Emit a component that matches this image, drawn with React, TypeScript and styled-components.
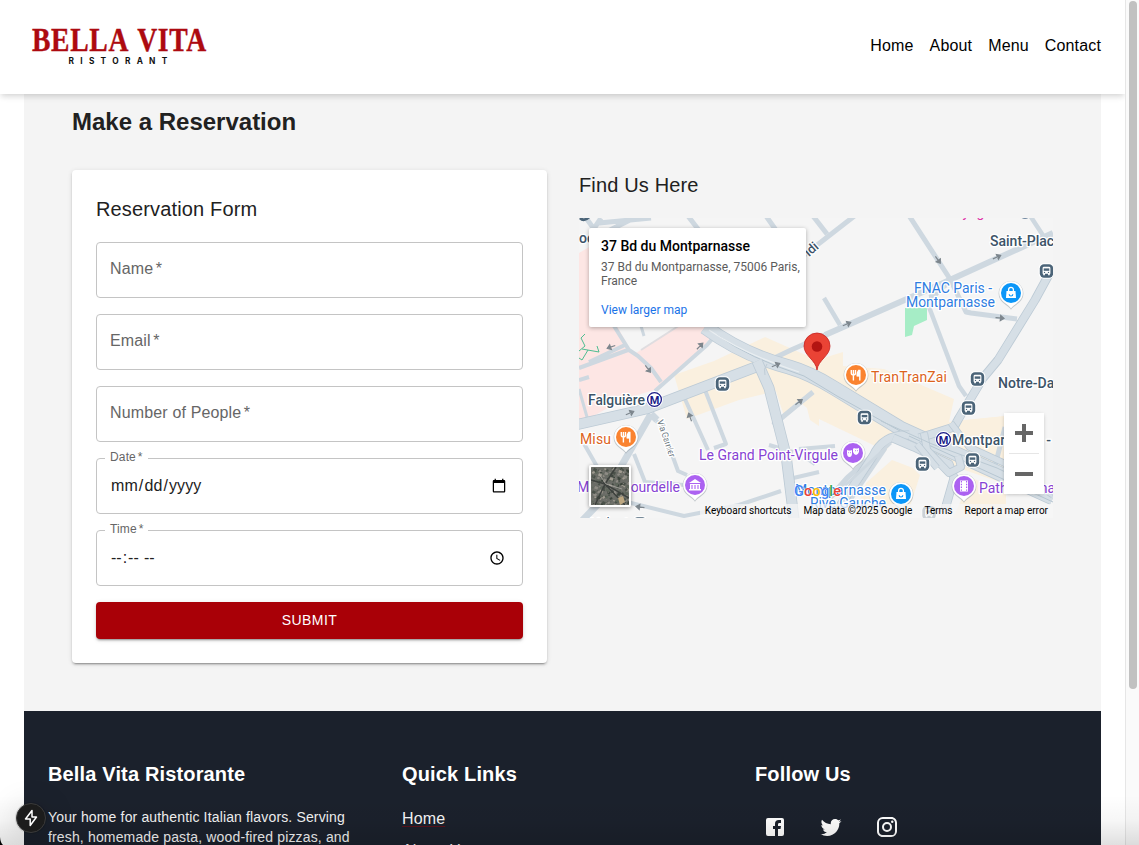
import React from 'react';
import styled, { createGlobalStyle } from 'styled-components';

const Global = createGlobalStyle`
  * { box-sizing: border-box; }
  html, body, #root { height: 100%; }
  body { margin: 0; overflow: hidden; background: #fff; color: rgba(0,0,0,.87); font-family: "Liberation Sans", Helvetica, Arial, sans-serif; }
  h1, h2, h3, p { margin: 0; }
`;

const Window = styled.div`
  display: grid; grid-template-columns: 1fr 14px; height: 845px; overflow: hidden; position: relative;
`;
const Page = styled.div`
  display: flex; flex-direction: column; overflow: hidden; min-width: 0;
`;
const Track = styled.div`
  background: #fafafa; border-left: 1px solid #e6e6e6; padding: 1px 2px 0 3px;
`;
const Thumb = styled.div`
  width: 8px; height: 688px; border-radius: 4px; background: #c1c1c1;
`;
const Header = styled.header`
  flex: none; z-index: 1; height: 94px; background: #fff; padding: 0 24px;
  display: flex; justify-content: space-between; align-items: center;
  box-shadow: 0 4px 6px -1px rgba(0,0,0,.11), 0 2px 6px -1px rgba(0,0,0,.07);
`;
const Nav = styled.nav`
  display: flex; gap: 16px; padding-bottom: 3px;
`;
const NavLink = styled.a`
  color: #000; font-size: 16px; line-height: 24px; letter-spacing: .15px;
`;
const Content = styled.main`
  flex: none; margin: 0 24px; height: 617px; padding: 10px 48px 0; background: #f4f4f4;
`;
const PageTitle = styled.h1`
  font-size: 24px; line-height: 36px; font-weight: 700; color: #212121;
`;
const Columns = styled.div`
  display: grid; grid-template-columns: 475px 474px; gap: 32px; margin-top: 30px; align-items: start;
`;
const Card = styled.form`
  display: flex; flex-direction: column; gap: 16px; height: 493px; padding: 24px; background: #fff; border-radius: 4px;
  box-shadow: 0 3px 1px -2px rgba(0,0,0,.2), 0 2px 2px rgba(0,0,0,.14), 0 1px 5px rgba(0,0,0,.12);
`;
const SectionTitle = styled.h2`
  font-size: 20px; line-height: 30px; padding-bottom: 2px; font-weight: 400; letter-spacing: .15px; color: #212121;
`;
const Field = styled.label`
  position: relative; display: flex; align-items: center; height: 56px; flex: none;
  padding: 0 13px; border: 1px solid #c4c4c4; border-radius: 4px;
  font-size: 16px; letter-spacing: .15px; color: #666;
`;
const FieldLabel = styled.span`
  padding-bottom: 3px;
`;
const FloatingLabel = styled.span`
  position: absolute; left: 8px; top: -9px; padding: 0 5px; background: #fff; font-size: 12px; line-height: 14px;
`;
const Required = styled.span`
  margin-left: .15em;
`;
const Picker = styled.input`
  width: 100%; border: 0; outline: 0; padding: 0; background: transparent; color: #212121;
  font: 16px "Liberation Sans", Helvetica, sans-serif; letter-spacing: .1px;
`;
const Submit = styled.button`
  height: 37px; flex: none; border: 0; border-radius: 4px; background: #a90007; color: #fff; text-transform: uppercase;
  padding: 0 0 2px; font: 14px "Liberation Sans", Helvetica, sans-serif; letter-spacing: .4px;
  box-shadow: 0 3px 1px -2px rgba(0,0,0,.2), 0 2px 2px rgba(0,0,0,.14), 0 1px 5px rgba(0,0,0,.12);
`;
const MapColumn = styled.section`
  display: flex; flex-direction: column; gap: 16px;
`;
const MapFrame = styled.div`
  position: relative; height: 300px; overflow: hidden; font-family: Roboto, sans-serif;
`;
const MapDrawing = styled.svg`
  display: block; font-family: Roboto, sans-serif;
`;
const PlaceCard = styled.div`
  position: absolute; left: 10px; top: 10px; width: 217px; height: 99px; padding: 10px 0 0 12px; background: #fff;
  border-radius: 2px; box-shadow: 0 1px 4px rgba(0,0,0,.3); font-size: 12px; line-height: 14px; color: #5b5b5b;
`;
const PlaceName = styled.h3`
  font-size: 14px; line-height: 17px; font-weight: 500; color: #000; margin-bottom: 5px;
`;
const MapLink = styled.a`
  display: block; margin-top: 15px; color: #1a73e8;
`;
const ZoomControl = styled.div`
  position: absolute; right: 9px; top: 195px; width: 40px; height: 81px; background: #fff; padding: 0 5px;
  box-shadow: 0 1px 4px -1px rgba(0,0,0,.3);
`;
const ZoomButton = styled.div`
  height: 40px; display: grid; place-items: center;
  & + & { border-top: 1px solid #e6e6e6; height: 41px; }
`;
const Satellite = styled.div`
  position: absolute; left: 10px; top: 247px; width: 42px; height: 42px; border: 2px solid #fff; border-radius: 2px;
  box-shadow: 0 1px 4px rgba(0,0,0,.4); overflow: hidden;
`;
const Legal = styled.div`
  position: absolute; right: 0; bottom: 0; height: 14px; display: flex; gap: 12px; padding: 0 5px;
  background: rgba(245,245,245,.75); font-size: 10px; line-height: 14px; color: #000; white-space: nowrap;
`;
const Footer = styled.footer`
  flex: none; margin: 0 24px; height: 300px; background: #1b212c; color: #fff; padding: 47px 24px 0;
  display: grid; grid-template-columns: 322px 321px 322px; column-gap: 32px;
`;
const FooterTitle = styled.h2`
  font-size: 20px; line-height: 32px; font-weight: 700; letter-spacing: .15px;
`;
const FooterText = styled.p`
  margin-top: 17px; font-size: 14px; line-height: 20px; letter-spacing: .15px; color: #f3f3f3;
`;
const FooterLinks = styled.div`
  display: flex; flex-direction: column; align-items: flex-start; gap: 12px; margin-top: 19px;
`;
const FooterLink = styled.a`
  font-size: 16px; line-height: 20px; letter-spacing: .15px; color: #f6f6f6;
  text-decoration: underline; text-decoration-color: rgba(169,0,7,.45); text-decoration-thickness: 1px; text-underline-offset: 2px;
`;
const Social = styled.div`
  display: flex; gap: 32px; margin-top: 25px; padding-left: 8px;
`;
const BottomFade = styled.div`
  position: absolute; left: 0; right: 0; bottom: 0; height: 50px; pointer-events: none; z-index: 3;
  background: linear-gradient(to bottom, rgba(0,0,0,0), rgba(0,0,0,.03) 50%, rgba(0,0,0,.12));
`;
const DevBadge = styled.div`
  position: absolute; left: 16px; top: 803px; width: 30px; height: 30px; border-radius: 50%; z-index: 4;
  background: #1c1c1c; border: 1px solid #3b3b3b; display: grid; place-items: center;
  box-shadow: 0 0 0 1px rgba(0,0,0,.1), 0 4px 32px rgba(0,0,0,.18);
`;
const WindowCorner = styled.svg`
  position: absolute; left: 0; bottom: 0; z-index: 5;
`;

const Logo = () => (
  <svg width="190" height="50" viewBox="0 0 190 50">
    <text x="8" y="29" fontFamily="Liberation Serif, serif" fontWeight="700" fontSize="33" fill="#ad0a10" stroke="#ad0a10" strokeWidth=".4" wordSpacing="3" letterSpacing=".8" textLength="175" lengthAdjust="spacingAndGlyphs">BELLA VITA</text>
    <text x="44.500" y="41.500" fontFamily="Inter, sans-serif" fontWeight="700" fontSize="8.300" fill="#111" letterSpacing="6.300">RISTORANT</text>
  </svg>
);

const Road = ({ d, w = 5, c = '#ced8e0' }: { d: string; w?: number; c?: string }) => (
  <path d={d} fill="none" stroke={c} strokeWidth={w} strokeLinejoin="round" />
);
const Avenue = ({ d, w = 10 }: { d: string; w?: number }) => (
  <>
    <path d={d} fill="none" stroke="#bccad5" strokeWidth={w} strokeLinejoin="round" />
    <path d={d} fill="none" stroke="#d6dfe6" strokeWidth={w - 1.6} strokeLinejoin="round" />
  </>
);
const Arrow = ({ x, y, r }: { x: number; y: number; r: number }) => (
  <path transform={`translate(${x} ${y}) rotate(${r})`} d="M-4.5 0H2M0.5-2.5L4 0L0.5 2.5Z" fill="#7d868d" stroke="#7d868d" strokeWidth="1.2" />
);
const Bus = ({ x, y }: { x: number; y: number }) => (
  <g transform={`translate(${x} ${y})`}>
    <rect x="-7.8" y="-7.8" width="15.6" height="15.6" rx="5" fill="#fff" />
    <rect x="-6.7" y="-6.7" width="13.4" height="13.4" rx="4.2" fill="#4b6478" />
    <path d="M-3.9-2.8Q-3.9-4.2-2.5-4.2H2.5Q3.9-4.2 3.9-2.8V2.7H-3.9ZM-3.3 2H-1.6V4.3H-3.3ZM1.6 2H3.3V4.3H1.6Z" fill="#fff" />
    <path d="M-2.8-2.6H2.8V-.2H-2.8Z" fill="#4b6478" />
    <circle cx="-2" cy="1.4" r=".7" fill="#4b6478" /><circle cx="2" cy="1.4" r=".7" fill="#4b6478" />
  </g>
);
const Pin = ({ x, y, color, children }: { x: number; y: number; color: string; children?: React.ReactNode }) => (
  <g transform={`translate(${x} ${y})`}>
    <path d="M0 16.8C-2 12.500-12.400 10-12.400 .5A12.400 12.400 0 0 1 12.400 .5C12.400 10 2 12.500 0 16.800Z" fill="#8f9ba4" opacity=".5" />
    <path d="M0 15.500C-2 11-11.800 9-11.800 0A11.800 11.800 0 0 1 11.800 0C11.800 9 2 11 0 15.500Z" fill="#fff" />
    <circle r="10" fill={color} />
    {children}
  </g>
);
const Fork = () => (
  <g stroke="#fff" fill="none" strokeWidth="1.4">
    <path d="M-4.7-5V-2Q-4.7 0-2.6 0Q-.5 0-.5-2V-5M-2.6-5V5.5" /><path d="M3.2-5Q.9-3 1.2.8H3.8M3.8-5.3V5.5" /><path d="M3.4-4.5L1.8-1V.6H3.4Z" fill="#fff" />
  </g>
);
const Bag = () => (
  <g><path d="M-4.5-2H4.5L5 5H-5Z" fill="#fff" /><path d="M-2.4-1V-3.3A2.4 2.4 0 0 1 2.4-3.3V-1" fill="none" stroke="#fff" strokeWidth="1.3" /><path d="M-1.8 1.2A1.8 1.8 0 0 0 1.8 1.2" fill="none" stroke="#0b96f8" strokeWidth="1.2" /></g>
);
const Metro = ({ x, y }: { x: number; y: number }) => (
  <g transform={`translate(${x} ${y})`}>
    <circle r="8.4" fill="#fff" /><circle r="6.9" fill="#fff" stroke="#1b1b87" strokeWidth="1.3" />
    <text y="4" fontSize="11" fontWeight="700" fill="#1b1b87" textAnchor="middle">M</text>
  </g>
);
const Label = ({ x, y, color = '#3c5368', size = 14, w, weight = 400, children }: { x: number; y: number; color?: string; size?: number; w?: number; weight?: number; children: string }) => (
  <text x={x} y={y} fontSize={size} fill={color} fontWeight={weight} stroke="#fff" strokeWidth="2.6" strokeLinejoin="round" paintOrder="stroke" textLength={w}>{children}</text>
);

const StreetMap = () => (
  <MapDrawing width="474" height="300" viewBox="0 0 474 300">
    <rect width="474" height="300" fill="#f5f5f5" />
    <path d="M0 35L12 28L55 108L62 123L90 106L138 110L125 128L90 160L75 172L45 181L0 206Z" fill="#fde6e4" />
    <path d="M36 104L54 137L100 107Z" fill="#f5f5f5" />
    <path d="M95 157L135 143L186 119L238 142L264 134V148L305 151L375 181L370 204L427 198V276L372 256L340 277L295 293H275L312 236L288 224L240 201V208L231 202L228 190L205 171L160 182L108 201Z" fill="#faf0df" />
    <path d="M189 149L205 198L236 174Z" fill="#faf0df" />
    <path d="M326 90L348 90V102L335 108L333 117L326 119Z" fill="#a6edc6" />
    <path d="M304 203L318 217L290 257L270 275L240 300H474V278L438 270L365 245Z" fill="#f5f5f5" />
    <path d="M275 300L287 265L313 242L334 250L341 257L330 292L320 300Z" fill="#faf0df" />
    <path d="M343 210L390 228L427 243V198L375 203Z" fill="#faf0df" />
    <path d="M383 256L427 274L427 300H374L385 276Z" fill="#faf0df" />

    <Road d="M22 0L14 12M7 0L18 15M25 15L65-5M20 5L72 0" />
    <Road d="M109-2L122 15M187-2L199 15M234-2L248 16M278-4L224 38L222 42" />
    <Road d="M329-4L371 61L387 94L392 95L438 101" />
    <Road d="M246 117L362 66L474 15" w={6} />
    <Road d="M373 60L354 72L350 89L380 168L387 178M450-4L467 22L474 19M245 80L261 107" w={4.5} />
    <Road d="M371 63L362 69L352 80" w={7} />
    <Road d="M35 108L50 132L59 138L72 150L82 164M10 144L48 126M0 150L49 132M0 162L10 159M76 173L128 127L140 113" w={4} />
    <Road d="M62 108L65 118M0 171L10 206" w={3} />
    <Road d="M62 132L101 107" w={2} c="#dfdde0" />
    <path d="M0 133L6 128L2 120L6 116M3 131L20 134L18 128M9 132L3 142L0 140" fill="none" stroke="#4fbd91" strokeWidth="1" />
    <Road d="M72 196L23 282L0 306M72 196L78 202" w={7} />
    <Road d="M4 224L20 252M55 236L66 264L105 267" w={4} />
    <Road d="M77 203L82 206L99 253L108 257" w={4} />
    <Road d="M105 179L129 232M126 172L147 226L135 230" w={4} />
    <Road d="M48 284L105 298L160 287L202 273M210 261L240 254M220 231L256 228M226 239L236 246M190 227L214 234" w={4} />
    <Road d="M194 207L234 174M246 117L212 132L185 145" w={5} />
    <Road d="M237 295L268 260L316 218M260 298L306 230M426 209L416 248" w={5} />

    <Avenue d="M-4 207L67 191L182 147" w={11} />
    <Avenue d="M126 109Q164 137 210 149Q231 155 255 170L321 210L474 280" w={15} />
    <path d="M138 117Q170 140 225 158L258 178L330 218L474 284" fill="none" stroke="#b6c6d1" strokeWidth="1" />
    <path d="M130 112Q165 136 220 154" fill="none" stroke="#e9eef1" strokeWidth="1.2" />
    <Avenue d="M178 143L190 170L207 237L215 301" w={11} />
    <path d="M188 146Q184 151 186 157" fill="none" stroke="#bfccd6" strokeWidth="1" />
    <Avenue d="M474 49L456 82L419 142L404 160L380 200L375 209L340 220" w={9} />
    <Avenue d="M330 217Q304 216 294 238L257 294" w={9} />
    <Avenue d="M314 220L335 229L370 246L375 260L365 295" w={9} />
    <Avenue d="M345 215L348 232L370 255L382 249L379 238" w={8} />
    <Avenue d="M372 205L390 229L425 245L474 277M338 226L358 250" w={7} />
    <path d="M302 203L353 226L418 250L474 277" fill="none" stroke="#bac9d3" strokeWidth="1" />
    <Road d="M239 292L273 261L312 225" w={3} />

    <Arrow x={32} y={129} r={160} /><Arrow x={121} y={128} r={-46} /><Arrow x={197} y={147} r={-22} />
    <Arrow x={69} y={151} r={53} /><Arrow x={51} y={195} r={-22} /><Arrow x={111} y={199} r={-110} />
    <Arrow x={220} y={184} r={-37} /><Arrow x={61} y={289} r={188} /><Arrow x={268} y={106} r={-22} />
    <Arrow x={359} y={42} r={55} /><Arrow x={418} y={39} r={-24} /><Arrow x={421} y={100} r={5} />

    <text x="367" y="-1" fontSize="14" fill="#df2da6">Voyageurs</text>
    <circle cx="446" cy="-5" r="6" fill="#7288a0" />
    <path d="M1 0Q5 4 10-1" stroke="#4b6478" strokeWidth="3" fill="none" />
    <Label x={0} y={25} weight={500}>oo</Label>
    <g transform="translate(230 39) rotate(-42)"><Label x={0} y={0} size={13} weight={500}>idi</Label></g>
    <Label x={411} y={28} size={14} weight={500}>Saint-Placide</Label>
    <Label x={335} y={75} color="#2f7de1" w={78}>FNAC Paris -</Label>
    <Label x={327} y={89} color="#2f7de1" w={89}>Montparnasse</Label>
    <Label x={9} y={187} weight={500} w={57}>Falguière</Label>
    <Label x={1} y={226} color="#dc631d" w={31}>Misu</Label>
    <Label x={292} y={164} color="#dc631d" w={76}>TranTranZai</Label>
    <Label x={419} y={170} size={14} weight={500}>Notre-Dame</Label>
    <Label x={120} y={242} color="#8642d3" w={139}>Le Grand Point-Virgule</Label>
    <Label x={-2} y={274} color="#8642d3" w={103}>Musée Bourdelle</Label>
    <Label x={373} y={227} size={14} weight={500} w={99}>Montparnasse -</Label>
    <Label x={400} y={275} color="#8642d3">Pathé Parnasse</Label>
    <g transform="translate(78 203) rotate(71)"><Label x={0} y={0} size={9} color="#6b7780" w={39}>Via Garnier</Label></g>
    <Label x={216} y={277} color="#2f7de1" w={91}>Montparnasse</Label>
    <Label x={231} y={290} color="#2f7de1" w={76}>Rive Gauche</Label>
    <Label x={12} y={309} size={13}>Volontaires</Label>

    <Bus x={467.5} y={53} /><Bus x={143.5} y={166} /><Bus x={398.5} y={161} /><Bus x={389.5} y={190} />
    <Bus x={285.5} y={199.5} /><Bus x={343.5} y={246} /><Bus x={393.5} y={242} /><Bus x={61} y={306} /><Bus x={350} y={295} />
    <Metro x={75.5} y={181.5} /><Metro x={364.5} y={221.5} />
    <Pin x={432} y={75} color="#0b96f8"><Bag /></Pin>
    <Pin x={322} y={276} color="#0b96f8"><Bag /></Pin>
    <Pin x={277} y={157} color="#fa8330"><Fork /></Pin>
    <Pin x={47} y={219} color="#fa8330"><Fork /></Pin>
    <Pin x={116} y={267} color="#ac62f1">
      <path d="M-6-2L0-6L6-2ZM-5-1H5V4H-5ZM-6 4H6V5.5H-6Z" fill="#fff" /><path d="M-3 4V0M0 4V0M3 4V0" stroke="#ac62f1" strokeWidth="1.1" />
    </Pin>
    <Pin x={274} y={235} color="#ac62f1">
      <path d="M-6-3Q-3-2-1-3V0Q-1 4-3.5 4Q-6 4-6 0ZM1-5Q3-4 6-5V-1Q5 2 3 2Q1 2 0-1V-4Z" fill="#fff" /><path d="M-4.7-.3H-4M-2.8-.3H-2M2-2.3H2.8M4.2-2.3H5" stroke="#ac62f1" />
    </Pin>
    <Pin x={385} y={268} color="#ac62f1">
      <path d="M-4-5.5H4V5.5H-4Z" fill="#fff" /><path d="M-2.6-5V5.5M2.6-5V5.5" stroke="#ac62f1" strokeDasharray="1.4 1.4" strokeWidth="1.2" />
    </Pin>
    <path d="M238 152C237 142 225 138 225 128A13 13 0 0 1 251 128C251 138 239 142 238 152Z" fill="#ea4335" stroke="#c5221f" strokeWidth=".8" />
    <circle cx="238" cy="128.5" r="5.3" fill="#b31412" />
    <text x="215" y="278" fontSize="14.5" fontWeight="500" stroke="#fff" strokeWidth=".8" paintOrder="stroke" textLength="47">
      <tspan fill="#4285f4">G</tspan><tspan fill="#ea4335">o</tspan><tspan fill="#fbbc04">o</tspan><tspan fill="#4285f4">g</tspan><tspan fill="#34a853">l</tspan><tspan fill="#ea4335">e</tspan>
    </text>
  </MapDrawing>
);

const roofs = Array.from({ length: 230 }, (_, i) => ({
  x: (i * 17.3) % 39, y: (i * 7.9 + (i % 11) * 3.7) % 39, s: 1 + (i % 4) * 0.8,
  c: ['#8d8b84', '#4a5149', '#70716b', '#a09b90', '#3d453d', '#5e665b'][(i * 5 + (i % 7)) % 6],
}));
const Aerial = () => (
  <svg width="38" height="38" viewBox="0 0 38 38">
    <rect width="38" height="38" fill="#6a6c66" />
    {roofs.map((r, i) => <rect key={i} x={r.x} y={r.y} width={r.s} height={r.s * 0.8} fill={r.c} transform={`rotate(${i % 2 ? 25 : -30} ${r.x} ${r.y})`} />)}
    <path d="M0 13L14 17L38 31M14 17L25 0M14 17L4 38M12 15L34 38" stroke="#3d413e" strokeWidth="1.5" fill="none" />
    <path d="M8 7L15 17L31 22" stroke="#aaa7a1" strokeWidth=".8" fill="none" />
    <path d="M27 31L32 29L34 35L29 38Z" fill="#bda781" />
  </svg>
);

const socialPaths = [
  'M5 3h14a2 2 0 0 1 2 2v14a2 2 0 0 1-2 2h-4v-7h2.500l.5-3H15V9.500c0-.9.400-1.500 1.500-1.500H18V5.100h-2.200C13.200 5.100 12 6.700 12 9v2h-2v3h2v7H5a2 2 0 0 1-2-2V5a2 2 0 0 1 2-2z',
  'M22.460 6c-.77.350-1.600.580-2.460.690.880-.53 1.560-1.370 1.880-2.380-.83.500-1.750.850-2.720 1.050C18.370 4.500 17.260 4 16 4c-2.350 0-4.270 1.920-4.270 4.290 0 .340.040.670.110.980C8.280 9.090 5.110 7.380 3 4.790c-.37.630-.58 1.370-.58 2.150 0 1.490.750 2.810 1.910 3.560-.71 0-1.370-.2-1.950-.5v.030c0 2.080 1.480 3.820 3.440 4.210a4.220 4.220 0 0 1-1.930.070 4.280 4.280 0 0 0 4 2.980 8.521 8.521 0 0 1-5.330 1.840c-.34 0-.68-.02-1.020-.06C3.440 20.290 5.700 21 8.120 21 16 21 20.330 14.460 20.330 8.790c0-.19 0-.37-.01-.56.840-.6 1.560-1.360 2.140-2.230z',
  'M7.800 2h8.400C19.400 2 22 4.600 22 7.800v8.400a5.800 5.800 0 0 1-5.800 5.800H7.800C4.600 22 2 19.400 2 16.200V7.800A5.800 5.800 0 0 1 7.800 2m-.2 2A3.600 3.600 0 0 0 4 7.600v8.800C4 18.390 5.610 20 7.600 20h8.800a3.600 3.600 0 0 0 3.600-3.600V7.600C20 5.610 18.390 4 16.400 4H7.600m9.650 1.500a1.250 1.250 0 1 1 0 2.500 1.250 1.250 0 0 1 0-2.500M12 7a5 5 0 1 1 0 10 5 5 0 0 1 0-10m0 2a3 3 0 1 0 0 6 3 3 0 0 0 0-6z',
];

export default function App() {
  return (
    <Window>
      <Global />
      <Page>
        <Header>
          <Logo />
          <Nav>{['Home', 'About', 'Menu', 'Contact'].map((n) => <NavLink key={n}>{n}</NavLink>)}</Nav>
        </Header>
        <Content>
          <PageTitle>Make a Reservation</PageTitle>
          <Columns>
            <Card>
              <SectionTitle>Reservation Form</SectionTitle>
              {['Name', 'Email', 'Number of People'].map((n) => (
                <Field key={n}><FieldLabel>{n}<Required>*</Required></FieldLabel></Field>
              ))}
              <Field><FloatingLabel>Date<Required>*</Required></FloatingLabel><Picker type="date" /></Field>
              <Field><FloatingLabel>Time<Required>*</Required></FloatingLabel><Picker type="time" /></Field>
              <Submit type="button">Submit</Submit>
            </Card>
            <MapColumn>
              <SectionTitle>Find Us Here</SectionTitle>
              <MapFrame>
                <StreetMap />
                <PlaceCard>
                  <PlaceName>37 Bd du Montparnasse</PlaceName>
                  <p>37 Bd du Montparnasse, 75006 Paris,<br />France</p>
                  <MapLink>View larger map</MapLink>
                </PlaceCard>
                <ZoomControl>
                  <ZoomButton><svg width="18" height="18"><path d="M0 9H18M9 0V18" stroke="#666" strokeWidth="4" /></svg></ZoomButton>
                  <ZoomButton><svg width="18" height="18"><path d="M0 9H18" stroke="#666" strokeWidth="4" /></svg></ZoomButton>
                </ZoomControl>
                <Satellite><Aerial /></Satellite>
                <Legal><span>Keyboard shortcuts</span><span>Map data ©2025 Google</span><span>Terms</span><span>Report a map error</span></Legal>
              </MapFrame>
            </MapColumn>
          </Columns>
        </Content>
        <Footer>
          <div>
            <FooterTitle>Bella Vita Ristorante</FooterTitle>
            <FooterText>Your home for authentic Italian flavors. Serving<br />fresh, homemade pasta, wood-fired pizzas, and</FooterText>
          </div>
          <div>
            <FooterTitle>Quick Links</FooterTitle>
            <FooterLinks><FooterLink>Home</FooterLink><FooterLink>About Us</FooterLink></FooterLinks>
          </div>
          <div>
            <FooterTitle>Follow Us</FooterTitle>
            <Social>{socialPaths.map((d) => <svg key={d} width="24" height="24" viewBox="0 0 24 24" fill="#fff" fillRule="evenodd"><path d={d} /></svg>)}</Social>
          </div>
        </Footer>
      </Page>
      <Track><Thumb /></Track>
      <BottomFade />
      <DevBadge>
        <svg width="16" height="18" viewBox="0 0 16 18" fill="none" stroke="#fff" strokeWidth="1.5" strokeLinejoin="round"><path d="M9 1.500L2.500 10H7.200V16.500L13.500 8H9Z" /></svg>
      </DevBadge>
      <WindowCorner width="8" height="8" viewBox="0 0 8 8"><path d="M0 0Q.5 6 3 8H0Z" fill="#000" /></WindowCorner>
    </Window>
  );
}
